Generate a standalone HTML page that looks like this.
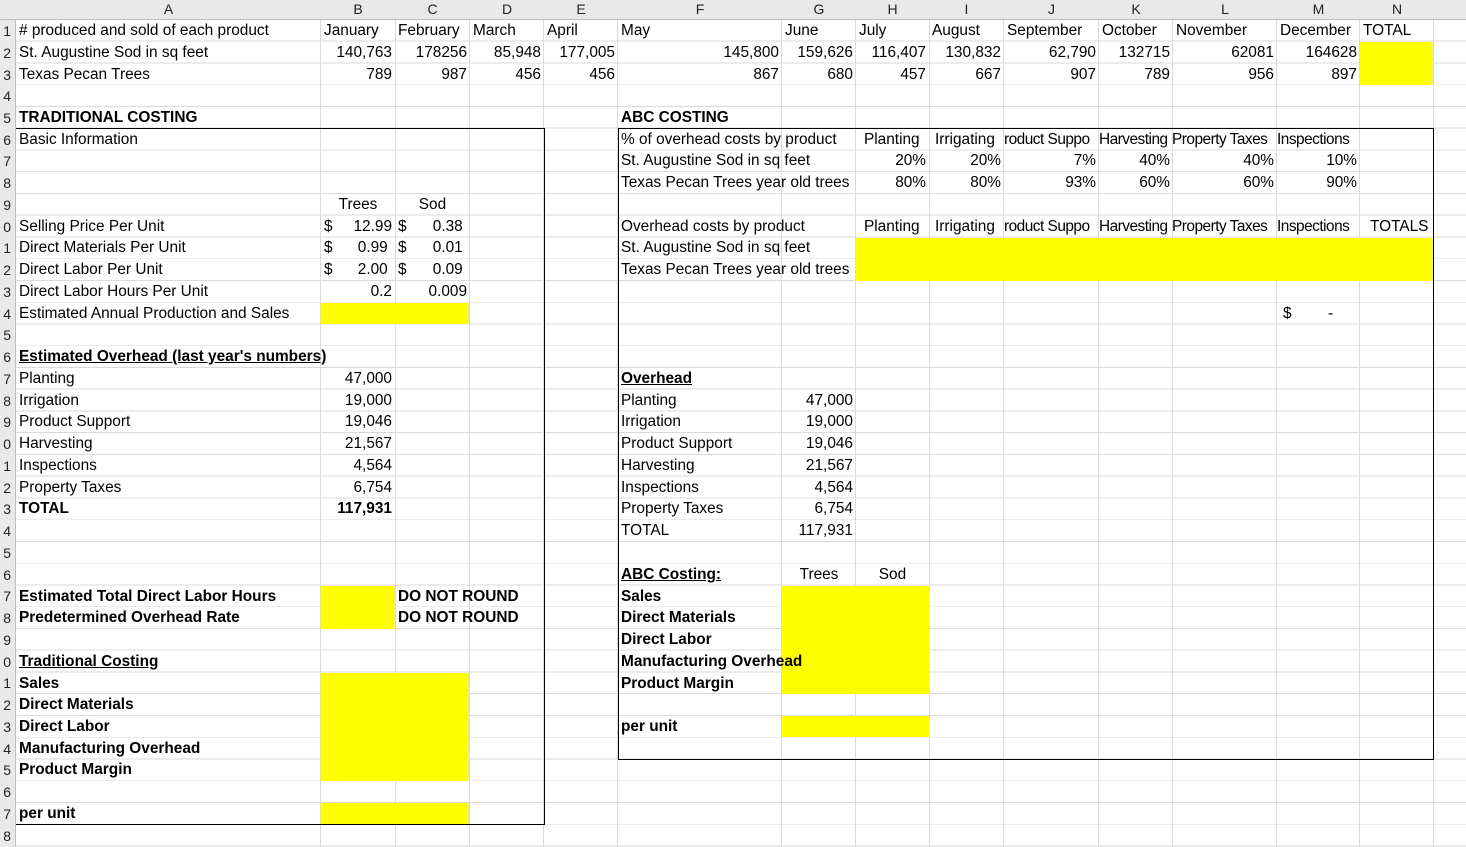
<!DOCTYPE html>
<html><head><meta charset="utf-8"><style>
body{margin:0;width:1466px;height:847px;overflow:hidden;background:#fff;font-family:"Liberation Sans",Arial,sans-serif;font-size:15.4px;color:#000;position:relative}
.grid{position:absolute;left:16px;top:20px;width:1450px;height:827px;background:repeating-linear-gradient(to bottom,transparent 0,transparent 20.75px,#dadada 20.75px,#dadada 21.75px)}
.v{position:absolute;top:20px;height:827px;width:1px;background:#dadada}
.y{position:absolute;background:#ffff00}
.c{position:absolute;height:21px;line-height:22px;white-space:nowrap;padding:0 3px;box-sizing:border-box}
.r{text-align:right}.m{text-align:center}.b{font-weight:bold}.u{text-decoration:underline}
.hdr{position:absolute;left:0;top:0;width:1466px;height:19px;background:#e9e9e9;border-bottom:1px solid #bdbdbd}
.hl{position:absolute;top:0;height:19px;line-height:19px;text-align:center;color:#222;font-size:14px}
.rh{position:absolute;left:0;top:20px;width:15px;height:827px;background:#e9e9e9;border-right:1px solid #bdbdbd}
.rn{position:absolute;left:0;width:11px;text-align:right;font-size:14px;line-height:22px;color:#222;overflow:hidden}
.k{position:absolute;background:#000}
.cu{display:flex;justify-content:space-between}
</style></head><body>
<div class="grid"></div>
<div class="v" style="left:320px"></div><div class="v" style="left:395px"></div><div class="v" style="left:469px"></div><div class="v" style="left:543px"></div><div class="v" style="left:617px"></div><div class="v" style="left:781px"></div><div class="v" style="left:855px"></div><div class="v" style="left:929px"></div><div class="v" style="left:1003px"></div><div class="v" style="left:1098px"></div><div class="v" style="left:1172px"></div><div class="v" style="left:1276px"></div><div class="v" style="left:1359px"></div><div class="v" style="left:1433px"></div>

<div class="y" style="left:1360px;top:42px;width:73px;height:43px"></div>
<div class="y" style="left:321px;top:303px;width:148px;height:21px"></div>
<div class="y" style="left:321px;top:586px;width:74px;height:43px"></div>
<div class="y" style="left:321px;top:673px;width:148px;height:108px"></div>
<div class="y" style="left:321px;top:803px;width:148px;height:21px"></div>
<div class="y" style="left:856px;top:238px;width:577px;height:43px"></div>
<div class="y" style="left:782px;top:586px;width:148px;height:108px"></div>
<div class="y" style="left:782px;top:716px;width:148px;height:21px"></div>

<div class="k" style="left:16px;top:128px;width:529px;height:1px"></div>
<div class="k" style="left:544px;top:128px;width:1px;height:697px"></div>
<div class="k" style="left:16px;top:824px;width:529px;height:1px"></div>
<div class="k" style="left:618px;top:128px;width:816px;height:1px"></div>
<div class="k" style="left:618px;top:128px;width:1px;height:631px"></div>
<div class="k" style="left:1433px;top:128px;width:1px;height:631px"></div>
<div class="k" style="left:618px;top:759px;width:816px;height:1px"></div>

<div class="hdr"></div>
<div class="hl" style="left:16px;width:305px">A</div><div class="hl" style="left:321px;width:74px">B</div><div class="hl" style="left:395px;width:75px">C</div><div class="hl" style="left:470px;width:74px">D</div><div class="hl" style="left:544px;width:74px">E</div><div class="hl" style="left:618px;width:164px">F</div><div class="hl" style="left:782px;width:74px">G</div><div class="hl" style="left:856px;width:73px">H</div><div class="hl" style="left:929px;width:75px">I</div><div class="hl" style="left:1004px;width:95px">J</div><div class="hl" style="left:1099px;width:74px">K</div><div class="hl" style="left:1173px;width:104px">L</div><div class="hl" style="left:1277px;width:83px">M</div><div class="hl" style="left:1360px;width:74px">N</div>
<div class="rh"></div>
<div class="rn" style="top:20px">1</div><div class="rn" style="top:42px">2</div><div class="rn" style="top:64px">3</div><div class="rn" style="top:85px">4</div><div class="rn" style="top:107px">5</div><div class="rn" style="top:129px">6</div><div class="rn" style="top:150px">7</div><div class="rn" style="top:172px">8</div><div class="rn" style="top:194px">9</div><div class="rn" style="top:216px">0</div><div class="rn" style="top:237px">1</div><div class="rn" style="top:259px">2</div><div class="rn" style="top:281px">3</div><div class="rn" style="top:303px">4</div><div class="rn" style="top:324px">5</div><div class="rn" style="top:346px">6</div><div class="rn" style="top:368px">7</div><div class="rn" style="top:390px">8</div><div class="rn" style="top:411px">9</div><div class="rn" style="top:433px">0</div><div class="rn" style="top:455px">1</div><div class="rn" style="top:477px">2</div><div class="rn" style="top:498px">3</div><div class="rn" style="top:520px">4</div><div class="rn" style="top:542px">5</div><div class="rn" style="top:564px">6</div><div class="rn" style="top:585px">7</div><div class="rn" style="top:607px">8</div><div class="rn" style="top:629px">9</div><div class="rn" style="top:651px">0</div><div class="rn" style="top:672px">1</div><div class="rn" style="top:694px">2</div><div class="rn" style="top:716px">3</div><div class="rn" style="top:738px">4</div><div class="rn" style="top:759px">5</div><div class="rn" style="top:781px">6</div><div class="rn" style="top:803px">7</div><div class="rn" style="top:825px">8</div>

<div class="c" style="left:16px;top:20px"># produced and sold of each product</div>
<div class="c" style="left:321px;top:20px">January</div><div class="c" style="left:395px;top:20px">February</div><div class="c" style="left:470px;top:20px">March</div><div class="c" style="left:544px;top:20px">April</div><div class="c" style="left:618px;top:20px">May</div><div class="c" style="left:782px;top:20px">June</div><div class="c" style="left:856px;top:20px">July</div><div class="c" style="left:929px;top:20px">August</div><div class="c" style="left:1004px;top:20px">September</div><div class="c" style="left:1099px;top:20px">October</div><div class="c" style="left:1173px;top:20px">November</div><div class="c" style="left:1277px;top:20px">December</div><div class="c" style="left:1360px;top:20px">TOTAL</div>
<div class="c" style="left:16px;top:42px">St. Augustine Sod in sq feet</div>
<div class="c r" style="left:321px;top:42px;width:74px">140,763</div><div class="c r" style="left:395px;top:42px;width:75px">178256</div><div class="c r" style="left:470px;top:42px;width:74px">85,948</div><div class="c r" style="left:544px;top:42px;width:74px">177,005</div><div class="c r" style="left:618px;top:42px;width:164px">145,800</div><div class="c r" style="left:782px;top:42px;width:74px">159,626</div><div class="c r" style="left:856px;top:42px;width:73px">116,407</div><div class="c r" style="left:929px;top:42px;width:75px">130,832</div><div class="c r" style="left:1004px;top:42px;width:95px">62,790</div><div class="c r" style="left:1099px;top:42px;width:74px">132715</div><div class="c r" style="left:1173px;top:42px;width:104px">62081</div><div class="c r" style="left:1277px;top:42px;width:83px">164628</div>
<div class="c" style="left:16px;top:64px">Texas Pecan Trees</div>
<div class="c r" style="left:321px;top:64px;width:74px">789</div><div class="c r" style="left:395px;top:64px;width:75px">987</div><div class="c r" style="left:470px;top:64px;width:74px">456</div><div class="c r" style="left:544px;top:64px;width:74px">456</div><div class="c r" style="left:618px;top:64px;width:164px">867</div><div class="c r" style="left:782px;top:64px;width:74px">680</div><div class="c r" style="left:856px;top:64px;width:73px">457</div><div class="c r" style="left:929px;top:64px;width:75px">667</div><div class="c r" style="left:1004px;top:64px;width:95px">907</div><div class="c r" style="left:1099px;top:64px;width:74px">789</div><div class="c r" style="left:1173px;top:64px;width:104px">956</div><div class="c r" style="left:1277px;top:64px;width:83px">897</div>
<div class="c b" style="left:16px;top:107px">TRADITIONAL COSTING</div>
<div class="c b" style="left:618px;top:107px">ABC COSTING</div>
<div class="c" style="left:16px;top:129px">Basic Information</div>
<div class="c" style="left:618px;top:129px">% of overhead costs by product</div>
<div class="c" style="left:856px;top:129px;width:577px;padding:0;overflow:hidden"><span style="position:absolute;left:8px">Planting</span><span style="position:absolute;left:79px">Irrigating</span><span style="position:absolute;left:148px;letter-spacing:-0.5px">roduct Suppo</span><span style="position:absolute;left:243px;letter-spacing:-0.5px">Harvesting</span><span style="position:absolute;left:316px;letter-spacing:-0.5px">Property Taxes</span><span style="position:absolute;left:421px;letter-spacing:-0.5px">Inspections</span></div>
<div class="c" style="left:618px;top:150px">St. Augustine Sod in sq feet</div>
<div class="c r" style="left:856px;top:150px;width:73px">20%</div><div class="c r" style="left:929px;top:150px;width:75px">20%</div><div class="c r" style="left:1004px;top:150px;width:95px">7%</div><div class="c r" style="left:1099px;top:150px;width:74px">40%</div><div class="c r" style="left:1173px;top:150px;width:104px">40%</div><div class="c r" style="left:1277px;top:150px;width:83px">10%</div>
<div class="c" style="left:618px;top:172px">Texas Pecan Trees year old trees</div>
<div class="c r" style="left:856px;top:172px;width:73px">80%</div><div class="c r" style="left:929px;top:172px;width:75px">80%</div><div class="c r" style="left:1004px;top:172px;width:95px">93%</div><div class="c r" style="left:1099px;top:172px;width:74px">60%</div><div class="c r" style="left:1173px;top:172px;width:104px">60%</div><div class="c r" style="left:1277px;top:172px;width:83px">90%</div>
<div class="c m" style="left:321px;top:194px;width:74px">Trees</div><div class="c m" style="left:395px;top:194px;width:75px">Sod</div>
<div class="c" style="left:16px;top:216px">Selling Price Per Unit</div>
<div class="c cu" style="left:321px;top:216px;width:74px"><span>$</span><span>12.99</span></div><div class="c cu" style="left:395px;top:216px;width:75px"><span>$</span><span>0.38&nbsp;</span></div>
<div class="c" style="left:618px;top:216px">Overhead costs by product</div>
<div class="c" style="left:856px;top:216px;width:577px;padding:0;overflow:hidden"><span style="position:absolute;left:8px">Planting</span><span style="position:absolute;left:79px">Irrigating</span><span style="position:absolute;left:148px;letter-spacing:-0.5px">roduct Suppo</span><span style="position:absolute;left:243px;letter-spacing:-0.5px">Harvesting</span><span style="position:absolute;left:316px;letter-spacing:-0.5px">Property Taxes</span><span style="position:absolute;left:421px;letter-spacing:-0.5px">Inspections</span><span style="position:absolute;left:514px">TOTALS</span></div>
<div class="c" style="left:16px;top:237px">Direct Materials Per Unit</div>
<div class="c cu" style="left:321px;top:237px;width:74px"><span>$</span><span>0.99&nbsp;</span></div><div class="c cu" style="left:395px;top:237px;width:75px"><span>$</span><span>0.01&nbsp;</span></div>
<div class="c" style="left:618px;top:237px">St. Augustine Sod in sq feet</div>
<div class="c" style="left:16px;top:259px">Direct Labor Per Unit</div>
<div class="c cu" style="left:321px;top:259px;width:74px"><span>$</span><span>2.00&nbsp;</span></div><div class="c cu" style="left:395px;top:259px;width:75px"><span>$</span><span>0.09&nbsp;</span></div>
<div class="c" style="left:618px;top:259px">Texas Pecan Trees year old trees</div>
<div class="c" style="left:16px;top:281px">Direct Labor Hours Per Unit</div>
<div class="c r" style="left:321px;top:281px;width:74px">0.2</div><div class="c r" style="left:395px;top:281px;width:75px">0.009</div>
<div class="c" style="left:16px;top:303px">Estimated Annual Production and Sales</div>
<div class="c" style="left:1280px;top:303px">$</div><div class="c" style="left:1325px;top:303px">-</div>
<div class="c b u" style="left:16px;top:346px">Estimated Overhead (last year's numbers)</div>
<div class="c" style="left:16px;top:368px">Planting</div><div class="c r" style="left:321px;top:368px;width:74px">47,000</div>
<div class="c b u" style="left:618px;top:368px">Overhead</div>
<div class="c" style="left:16px;top:390px">Irrigation</div><div class="c r" style="left:321px;top:390px;width:74px">19,000</div>
<div class="c" style="left:618px;top:390px">Planting</div><div class="c r" style="left:782px;top:390px;width:74px">47,000</div>
<div class="c" style="left:16px;top:411px">Product Support</div><div class="c r" style="left:321px;top:411px;width:74px">19,046</div>
<div class="c" style="left:618px;top:411px">Irrigation</div><div class="c r" style="left:782px;top:411px;width:74px">19,000</div>
<div class="c" style="left:16px;top:433px">Harvesting</div><div class="c r" style="left:321px;top:433px;width:74px">21,567</div>
<div class="c" style="left:618px;top:433px">Product Support</div><div class="c r" style="left:782px;top:433px;width:74px">19,046</div>
<div class="c" style="left:16px;top:455px">Inspections</div><div class="c r" style="left:321px;top:455px;width:74px">4,564</div>
<div class="c" style="left:618px;top:455px">Harvesting</div><div class="c r" style="left:782px;top:455px;width:74px">21,567</div>
<div class="c" style="left:16px;top:477px">Property Taxes</div><div class="c r" style="left:321px;top:477px;width:74px">6,754</div>
<div class="c" style="left:618px;top:477px">Inspections</div><div class="c r" style="left:782px;top:477px;width:74px">4,564</div>
<div class="c b" style="left:16px;top:498px">TOTAL</div><div class="c r b" style="left:321px;top:498px;width:74px">117,931</div>
<div class="c" style="left:618px;top:498px">Property Taxes</div><div class="c r" style="left:782px;top:498px;width:74px">6,754</div>
<div class="c" style="left:618px;top:520px">TOTAL</div><div class="c r" style="left:782px;top:520px;width:74px">117,931</div>
<div class="c b u" style="left:618px;top:564px">ABC Costing:</div>
<div class="c m" style="left:782px;top:564px;width:74px">Trees</div><div class="c m" style="left:856px;top:564px;width:73px">Sod</div>
<div class="c b" style="left:16px;top:586px">Estimated Total Direct Labor Hours</div><div class="c b" style="left:395px;top:586px">DO NOT ROUND</div>
<div class="c b" style="left:618px;top:586px">Sales</div>
<div class="c b" style="left:16px;top:607px">Predetermined Overhead Rate</div><div class="c b" style="left:395px;top:607px">DO NOT ROUND</div>
<div class="c b" style="left:618px;top:607px">Direct Materials</div>
<div class="c b" style="left:618px;top:629px">Direct Labor</div>
<div class="c b u" style="left:16px;top:651px">Traditional Costing</div>
<div class="c b" style="left:618px;top:651px">Manufacturing Overhead</div>
<div class="c b" style="left:16px;top:673px">Sales</div>
<div class="c b" style="left:618px;top:673px">Product Margin</div>
<div class="c b" style="left:16px;top:694px">Direct Materials</div>
<div class="c b" style="left:16px;top:716px">Direct Labor</div>
<div class="c b" style="left:618px;top:716px">per unit</div>
<div class="c b" style="left:16px;top:738px">Manufacturing Overhead</div>
<div class="c b" style="left:16px;top:759px">Product Margin</div>
<div class="c b" style="left:16px;top:803px">per unit</div>
</body></html>
